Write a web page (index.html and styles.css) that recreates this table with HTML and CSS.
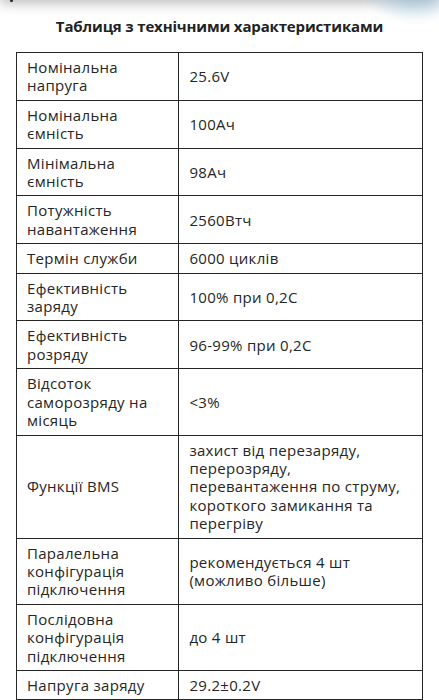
FILE: index.html
```html
<!DOCTYPE html>
<html lang="uk">
<head>
<meta charset="utf-8">
<title>Таблиця з технічними характеристиками</title>
<link rel="stylesheet" href="styles.css">
</head>
<body>
<div class="topbar"><span class="topbar-mark"></span></div>
<div class="blob"></div>
<main class="page">
  <h2 class="title">Таблиця з технічними характеристиками</h2>
  <table class="specs">
    <colgroup><col class="col-name"><col class="col-value"></colgroup>
    <tbody>
      <tr><td>Номінальна напруга</td><td>25.6V</td></tr>
      <tr><td>Номінальна ємність</td><td>100Ач</td></tr>
      <tr><td>Мінімальна ємність</td><td>98Ач</td></tr>
      <tr><td>Потужність навантаження</td><td>2560Втч</td></tr>
      <tr><td>Термін служби</td><td>6000 циклів</td></tr>
      <tr><td>Ефективність заряду</td><td>100% при 0,2C</td></tr>
      <tr><td>Ефективність розряду</td><td>96-99% при 0,2C</td></tr>
      <tr><td>Відсоток саморозряду на місяць</td><td>&lt;3%</td></tr>
      <tr><td>Функції BMS</td><td>захист від перезаряду, перерозряду, перевантаження по струму, короткого замикання та перегріву</td></tr>
      <tr><td>Паралельна конфігурація підключення</td><td>рекомендується 4 шт (можливо більше)</td></tr>
      <tr><td>Послідовна конфігурація підключення</td><td>до 4 шт</td></tr>
      <tr><td>Напруга заряду</td><td>29.2±0.2V</td></tr>
    </tbody>
  </table>
</main>
</body>
</html>
```

FILE: styles.css
```css
html, body {
  margin: 0;
  padding: 0;
  background: #ffffff;
}

body {
  font-family: "Open Sans", "Noto Sans", sans-serif;
  color: #262626;
  overflow: hidden;
}

.topbar {
  position: fixed;
  top: -60px;
  left: 0;
  right: 0;
  height: 60px;
  background: #ffffff;
  box-shadow: 0 3px 12px rgba(0, 0, 0, 0.28);
  z-index: 2;
}

.topbar-mark {
  position: absolute;
  left: 10px;
  bottom: -2px;
  width: 3px;
  height: 3px;
  background: #333;
  border-radius: 1px;
}

.blob {
  position: fixed;
  top: -30px;
  right: -20px;
  width: 90px;
  height: 50px;
  border-radius: 50%;
  background: radial-gradient(ellipse at center, rgba(150, 190, 215, 0.75), rgba(190, 215, 230, 0.3) 60%, rgba(255, 255, 255, 0) 75%);
  filter: blur(4px);
  z-index: 3;
}

.page {
  padding: 0 16px;
}

.title {
  margin: 16px 0 16px;
  font-size: 15px;
  line-height: 20px;
  font-weight: 700;
  letter-spacing: -0.15px;
  text-align: center;
  color: #222;
}

.specs {
  width: 100%;
  border-collapse: collapse;
  table-layout: fixed;
  font-size: 15px;
  line-height: 18.4px;
  letter-spacing: 0.3px;
}

.col-name {
  width: 40%;
}

.specs td {
  border: 1px solid #262626;
  padding: 5px 10px;
  vertical-align: middle;
}
```
